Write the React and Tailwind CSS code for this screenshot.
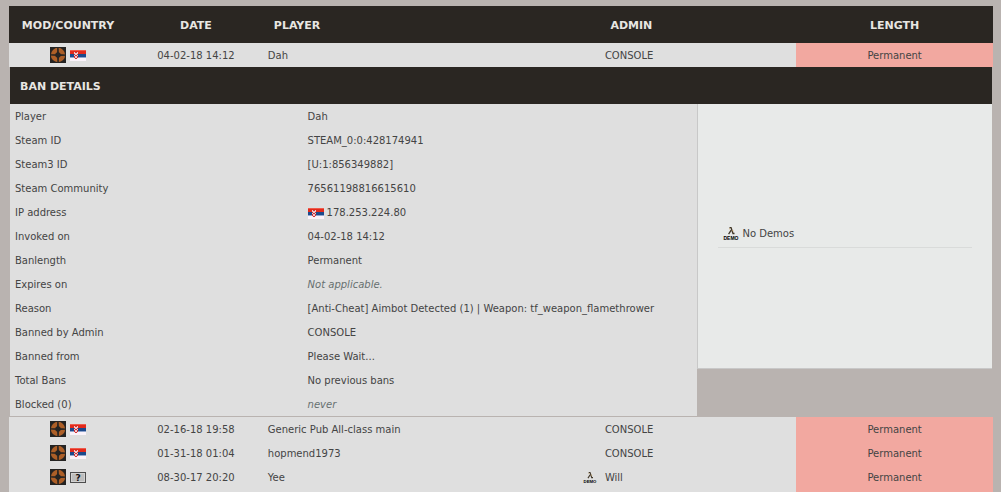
const DETAILS = [
  { label: "Player", value: "Dah" },
  { label: "Steam ID", value: "STEAM_0:0:428174941" },
  { label: "Steam3 ID", value: "[U:1:856349882]", href: "#steam3" },
  { label: "Steam Community", value: "76561198816615610", href: "#community" },
  { label: "IP address", value: "178.253.224.80", flag: true },
  { label: "Invoked on", value: "04-02-18 14:12" },
  { label: "Banlength", value: "Permanent" },
  { label: "Expires on", value: "Not applicable.", muted: true },
  { label: "Reason", value: "[Anti-Cheat] Aimbot Detected (1) | Weapon: tf_weapon_flamethrower" },
  { label: "Banned by Admin", value: "CONSOLE" },
  { label: "Banned from", value: "Please Wait..." },
  { label: "Total Bans", value: "No previous bans" },
  { label: "Blocked (0)", value: "never", muted: true },
]

const BANS = [
  { id: 1, country: "rs", date: "04-02-18 14:12", player: "Dah", admin: "CONSOLE", open: true },
  { id: 2, country: "rs", date: "02-16-18 19:58", player: "Generic Pub All-class main", admin: "CONSOLE" },
  { id: 3, country: "rs", date: "01-31-18 01:04", player: "hopmend1973", admin: "CONSOLE" },
  { id: 4, country: null, date: "08-30-17 20:20", player: "Yee", admin: "Will", demo: true },
]

function ModIcon() {
  return (
    <svg viewBox="0 0 16 16" className="h-4 w-4" role="img" aria-label="Team Fortress 2">
      <rect width="16" height="16" fill="#242322" />
      <circle cx="8" cy="8" r="7.2" fill="#ad5f27" />
      <path d="M7.2 0L7 8H9L8.6 0ZM0 7.2L8 7V9L0 8.4ZM16 7.4L8 7V9L16 8.8ZM7.4 16L7 8H9L8.8 16Z" fill="#242322" />
      <circle cx="8" cy="8" r="2.7" fill="#242322" />
    </svg>
  )
}

function SerbiaFlag() {
  return (
    <svg viewBox="0 0 16 11" className="h-[11px] w-4" role="img" aria-label="Serbia">
      <rect width="16" height="11" fill="#fbf3fa" />
      <rect width="16" height="4" fill="#e32a1c" />
      <rect width="16" height="1" fill="#ee5b4c" />
      <rect y="4" width="16" height="3" fill="#1c4a8c" />
      <rect y="7" width="16" height="1" fill="#8fa5cc" />
      <path d="M4 2h4v5L7 9H5L4 7Z" fill="#f0c9cc" />
      <path d="M5 2h2v1H5zM4 4h1v1H4zM7 4h1v1H7zM5 5h2v1H5zM4 6h1v2H4zM7 6h1v2H7zM5 8h2v1H5z" fill="#cf3438" />
    </svg>
  )
}

function UnknownFlag() {
  return (
    <svg viewBox="0 0 16 11" className="h-[11px] w-4" role="img" aria-label="Unknown country">
      <rect x="0.5" y="0.5" width="15" height="10" fill="#bdbdbd" stroke="#4d4d4d" />
      <rect x="1.5" y="1.5" width="13" height="8" fill="none" stroke="#d2d2d2" />
      <text x="8" y="9" textAnchor="middle" fontFamily="DejaVu Sans" fontSize="9" fontWeight="bold" fill="#111">
        ?
      </text>
    </svg>
  )
}

function DemoIcon({ className }) {
  return (
    <svg viewBox="0 0 16 14" className={className} aria-hidden="true">
      <path d="M6.5 0.5H8L10 6.5H11.5" fill="none" stroke="#3f3526" strokeWidth="1.3" />
      <path d="M8.2 3.2L5.6 7.2" fill="none" stroke="#3f3526" strokeWidth="1.3" />
      <path d="M6.2 1.8H7.2M9.6 3L10 4.4" fill="none" stroke="#c69b52" strokeWidth="0.8" />
      <text x="8" y="13" textAnchor="middle" fontFamily="Liberation Sans" fontSize="5" fontWeight="bold" fill="#000">
        DEMO
      </text>
    </svg>
  )
}

function BanDetails() {
  return (
    <section className="px-px pb-px">
      <h2 className="bg-[#2a2622] px-[10px] pt-[11px] pb-[9px] text-[11px] leading-[17px] font-bold text-[#e8e6e2]">
        BAN DETAILS
      </h2>
      <div className="flex items-start">
        <table className="min-w-0 flex-1 table-fixed border-collapse bg-[#dfdfdf]">
          <tbody>
            {DETAILS.map(({ label, value, href, flag, muted }) => (
              <tr key={label} className="h-6">
                <th scope="row" className="w-[43%] px-[5px] pt-[2px] text-left font-normal">{label}</th>
                <td className="px-[2px] pt-[2px] whitespace-nowrap">
                  {flag ? (
                    <span className="flex items-center gap-[3px]">
                      <SerbiaFlag />
                      {value}
                    </span>
                  ) : muted ? (
                    <em className="text-[#677070]">{value}</em>
                  ) : href ? (
                    <a href={href}>{value}</a>
                  ) : (
                    value
                  )}
                </td>
              </tr>
            ))}
          </tbody>
        </table>
        <aside className="flex h-[265px] w-[30%] flex-col justify-center border-b border-l border-[#c8c8c8] bg-[#e8eae9] px-5">
          <ul>
            <li className="flex items-center gap-[3px] border-b border-[#d9dbda] px-[5px] pt-[2px] pb-[5px]">
              <DemoIcon className="h-[14px] w-4" />
              No Demos
            </li>
          </ul>
        </aside>
      </div>
    </section>
  )
}

function BanRow({ ban }) {
  return (
    <tr className="h-6 bg-[#dfdfdf]">
      <td>
        <span className="flex items-center justify-center gap-1">
          <ModIcon />
          {ban.country === "rs" ? <SerbiaFlag /> : <UnknownFlag />}
        </span>
      </td>
      <td className="pt-[2px] text-center whitespace-nowrap">{ban.date}</td>
      <td className="px-[3px] pt-[2px]">{ban.player}</td>
      <td className="pt-[2px]">
        <span className="mx-auto flex w-[97px] items-center">
          <span className="w-[22px] shrink-0">
            {ban.demo && <DemoIcon className="h-3 w-[14px]" />}
          </span>
          {ban.admin}
        </span>
      </td>
      <td className="bg-[#f2a8a0] pt-[2px] text-center">Permanent</td>
    </tr>
  )
}

export default function App() {
  return (
    <main className="bg-[#b9b3b0] pt-[6px] pr-2 pl-[9px] font-['Verdana','DejaVu_Sans',sans-serif] text-[10px] leading-4 text-[#444]">
      <table className="w-full table-fixed border-collapse">
        <thead>
          <tr className="h-[37px] bg-[#2a2622] text-[11px] text-[#e8e6e2]">
            <th className="w-[12%] pt-[2px]">MOD/COUNTRY</th>
            <th className="w-[14%] pt-[2px]">DATE</th>
            <th className="px-[9px] pt-[2px] text-left">PLAYER</th>
            <th className="w-[33.5%] pt-[2px]">ADMIN</th>
            <th className="w-[20%] pt-[2px]">LENGTH</th>
          </tr>
        </thead>
        {BANS.map((ban) => (
          <tbody key={ban.id}>
            <BanRow ban={ban} />
            {ban.open && (
              <tr>
                <td colSpan={5} className="p-0">
                  <BanDetails />
                </td>
              </tr>
            )}
          </tbody>
        ))}
        <tfoot>
          <tr className="h-[3px] bg-[#dfdfdf]">
            <td colSpan={4} />
            <td className="bg-[#f2a8a0]" />
          </tr>
        </tfoot>
      </table>
    </main>
  )
}
